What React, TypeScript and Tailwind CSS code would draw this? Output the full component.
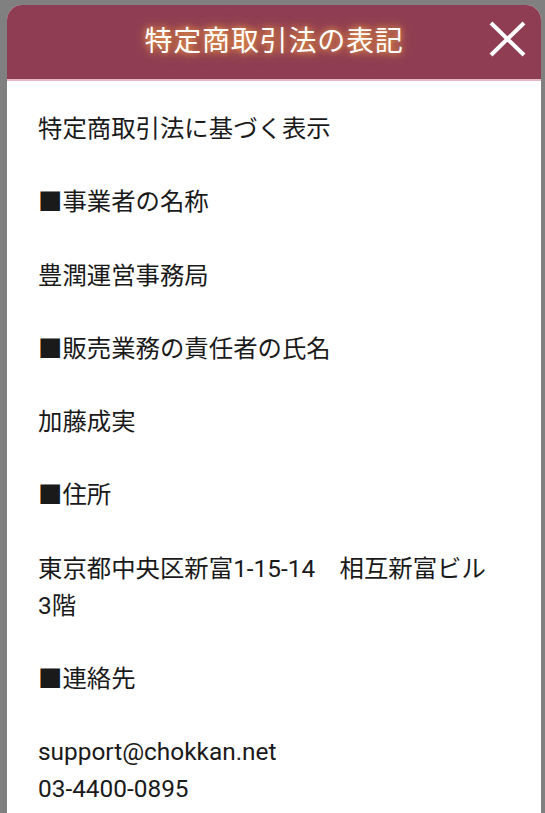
import React from 'react';

const lines: string[][] = [
  ['特定商取引法に基づく表示'],
  ['■事業者の名称'],
  ['豊潤運営事務局'],
  ['■販売業務の責任者の氏名'],
  ['加藤成実'],
  ['■住所'],
  ['東京都中央区新富1-15-14　相互新富ビル', '3階'],
  ['■連絡先'],
  ['support@chokkan.net', '03-4400-0895'],
];

const App: React.FC = () => {
  return (
    <div className="min-h-screen bg-[#808080] pt-[5px] pl-[7px] pr-[4px] overflow-hidden">
      <div
        className="bg-white rounded-t-[15px] overflow-hidden min-h-[808px]"
        style={{ fontFamily: 'Roboto, "Noto Sans CJK JP", sans-serif' }}
      >
        <header className="relative h-[76px] bg-[#8e3d53] border-b-2 border-[#e7b9c4] flex items-center justify-center">
          <h1 className="text-[28px] leading-none text-white tracking-[0.8px] [text-shadow:0_0_6px_#f5a04a,0_0_14px_#d8843c]">
            特定商取引法の表記
          </h1>
          <button className="absolute right-[15px] top-[16px] w-[37px] h-[36px] flex items-center justify-center" aria-label="閉じる">
            <svg width="37" height="36" viewBox="0 0 37 36" fill="none" stroke="white" strokeWidth="4">
              <path d="M2 2 L35 34 M35 2 L2 34" />
            </svg>
          </button>
        </header>
        <div className="pt-[29px] pl-[31px] pr-[16px] text-[24.4px] leading-[37px] text-[#1a1a1a]">
          {lines.map((group, i) => (
            <div key={i} className={i > 0 ? 'mt-[36.25px]' : ''}>
              {group.map((t, j) => (
                <p key={j}>{t}</p>
              ))}
            </div>
          ))}
        </div>
      </div>
    </div>
  );
};

export default App;
